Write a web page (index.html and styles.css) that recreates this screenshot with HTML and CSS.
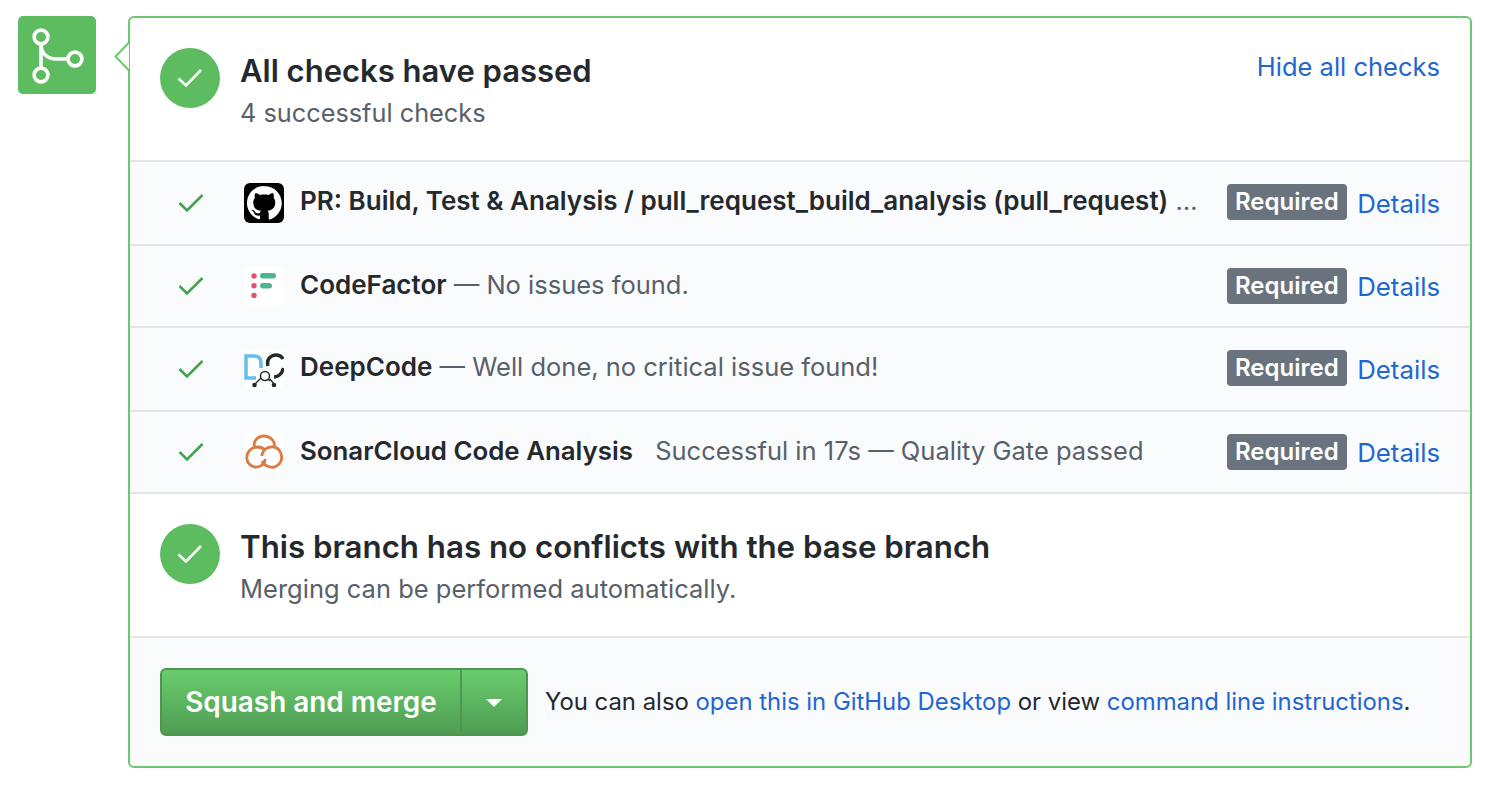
FILE: index.html
```html
<!DOCTYPE html>
<html lang="en">
<head>
    <meta charset="UTF-8">
    <title>Merge checks</title>
    <link rel="stylesheet" href="styles.css">
</head>
<body>
    <div class="merge-area">
        <div class="merge-icon">
            <svg width="78" height="78" viewBox="0 0 78 78" fill="none" stroke="#fff" stroke-width="3.6">
                <circle cx="23" cy="21" r="6.900"/>
                <circle cx="23" cy="59" r="6.900"/>
                <circle cx="57" cy="43" r="6.900"/>
                <path d="M23 28V52M23 30C24 38 30 43 38 43H50"/>
            </svg>
        </div>
        <div class="merge-box">
            <svg class="caret" width="16" height="30" viewBox="0 0 16 30">
                <path d="M15 0.5L1.5 14.5L15 28.5" fill="#fff" stroke="#6cc76f" stroke-width="2"/>
            </svg>

            <div class="section head-section">
                <div class="status-circle">
                    <svg width="30" height="30" viewBox="0 0 30 30" fill="none" stroke="#fff" stroke-width="2.6">
                        <path d="M3.5 15.5L11 22.5L26 7"/>
                    </svg>
                </div>
                <div class="section-text">
                    <h3>All checks have passed</h3>
                    <p>4 successful checks</p>
                </div>
                <a class="link toggle-link" href="#">Hide all checks</a>
            </div>

            <div class="check-row row-one">
                <svg class="check" width="26" height="20" viewBox="0 0 26 20" fill="none" stroke="#45a24d" stroke-width="2.6">
                    <path d="M1.5 10L9 17.5L24.5 2"/>
                </svg>
                <div class="logo logo-github">
                    <svg width="40" height="40" viewBox="0 0 16 16">
                        <path fill="#fff" d="M8 1.2C4.2 1.2 1.2 4.2 1.2 8c0 3 2 5.6 4.7 6.5.3.1.5-.1.5-.3v-1.2c-1.9.4-2.3-.9-2.3-.9-.3-.8-.8-1-.8-1-.6-.4 0-.4 0-.4.7 0 1 .7 1 .7.6 1 1.600.7 2.100.6 0-.4.200-.7.400-.9-1.500-.2-3.100-.8-3.100-3.400 0-.7.300-1.400.700-1.800-.1-.2-.3-.9.100-1.800 0 0 .6-.2 1.900.7.500-.2 1.100-.2 1.700-.2s1.200 0 1.700.2c1.300-.9 1.900-.7 1.900-.7.400.9.200 1.600.100 1.800.400.5.700 1.100.700 1.800 0 2.600-1.600 3.200-3.100 3.400.2.200.5.600.5 1.300v1.900c0 .2.100.4.500.3 2.700-.9 4.700-3.500 4.700-6.500 0-3.800-3-6.800-6.800-6.800z"/>
                    </svg>
                </div>
                <div class="check-text"><b>PR: Build, Test &amp; Analysis / pull_request_build_analysis (pull_request)</b> <span>…</span></div>
                <span class="label">Required</span>
                <a class="link" href="#">Details</a>
            </div>

            <div class="check-row row-two">
                <svg class="check" width="26" height="20" viewBox="0 0 26 20" fill="none" stroke="#45a24d" stroke-width="2.6">
                    <path d="M1.5 10L9 17.5L24.5 2"/>
                </svg>
                <div class="logo">
                    <svg width="40" height="40" viewBox="0 0 40 40">
                        <circle cx="10" cy="10" r="2.700" fill="#e0526e"/>
                        <circle cx="10" cy="19.700" r="2.700" fill="#e0526e"/>
                        <circle cx="10" cy="29.500" r="2.700" fill="#e0526e"/>
                        <rect x="16" y="7" width="16" height="5.500" rx="2.700" fill="#4fb393"/>
                        <rect x="16" y="17" width="12" height="5.500" rx="2.700" fill="#4fb393"/>
                    </svg>
                </div>
                <div class="check-text"><b>CodeFactor</b> <span>— No issues found.</span></div>
                <span class="label">Required</span>
                <a class="link" href="#">Details</a>
            </div>

            <div class="check-row row-three">
                <svg class="check" width="26" height="20" viewBox="0 0 26 20" fill="none" stroke="#45a24d" stroke-width="2.6">
                    <path d="M1.5 10L9 17.5L24.5 2"/>
                </svg>
                <div class="logo">
                    <svg width="40" height="40" viewBox="0 0 40 40" fill="none">
                        <path d="M12 29H2V7H10C15 7 17 10 17 14V19" stroke="#62c0ea" stroke-width="3.500"/>
                        <path d="M39 10C37 6 32 5 28 7C24 9 23 13 24 17M39.500 19C38 25 34 28 30 28" stroke="#24292e" stroke-width="3.500"/>
                        <circle cx="21" cy="27" r="4.500" stroke="#24292e" stroke-width="1.500"/>
                        <path d="M24 30L26 32M17 29L11 35M26 30L30 35" stroke="#24292e" stroke-width="1.300"/>
                        <circle cx="10.500" cy="36" r="2.300" fill="#24292e"/>
                        <circle cx="30" cy="36" r="2.300" fill="#24292e"/>
                    </svg>
                </div>
                <div class="check-text"><b>DeepCode</b> <span>— Well done, no critical issue found!</span></div>
                <span class="label">Required</span>
                <a class="link" href="#">Details</a>
            </div>

            <div class="check-row row-four">
                <svg class="check" width="26" height="20" viewBox="0 0 26 20" fill="none" stroke="#45a24d" stroke-width="2.6">
                    <path d="M1.5 10L9 17.5L24.5 2"/>
                </svg>
                <div class="logo">
                    <svg width="40" height="40" viewBox="0 0 40 40" fill="none" stroke="#dd7a3f" stroke-width="2.800">
                        <path d="M11 16C8 9 14 4 20 4C26 4 32 9 30 16"/>
                        <path d="M21 18C17 14 10 14 6 18C1 23 2 31 8 34C14 37 21 33 21 27"/>
                        <path d="M18 24C18 18 24 14 30 15C36 16 39 24 37 29C35 34 30 36 26 35C22 34 19 32 18 29"/>
                    </svg>
                </div>
                <div class="check-text"><b class="sonar-name">SonarCloud Code Analysis</b> <span class="gap-text">Successful in 17s — Quality Gate passed</span></div>
                <span class="label">Required</span>
                <a class="link" href="#">Details</a>
            </div>

            <div class="section branch-section">
                <div class="status-circle">
                    <svg width="30" height="30" viewBox="0 0 30 30" fill="none" stroke="#fff" stroke-width="2.6">
                        <path d="M3.5 15.5L11 22.5L26 7"/>
                    </svg>
                </div>
                <div class="section-text">
                    <h3>This branch has no conflicts with the base branch</h3>
                    <p>Merging can be performed automatically.</p>
                </div>
            </div>

            <div class="merge-footer">
                <div class="btn-group">
                    <button class="btn-merge">Squash and merge</button>
                    <button class="btn-arrow"><span class="arrow-down"></span></button>
                </div>
                <p class="alt-text">You can also <a class="link" href="#">open this in GitHub Desktop</a> or view <a class="link" href="#">command line instructions</a>.</p>
            </div>
        </div>
    </div>
</body>
</html>
```

FILE: styles.css
```css
body {
    margin: 0;
    background: #fff;
    font-family: Inter, "Liberation Sans", sans-serif;
    color: #24292e;
}
.merge-area {
    display: flex;
    align-items: flex-start;
    gap: 32px;
    padding: 16px 16px 0 18px;
}
.merge-icon {
    width: 78px;
    height: 78px;
    flex: none;
    background: #5dbb60;
    border-radius: 5px;
}
.merge-icon svg {
    display: block;
}
.merge-box {
    position: relative;
    flex: 1;
    min-width: 0;
    height: 752px;
    box-sizing: border-box;
    border: 2px solid #6cc76f;
    border-radius: 6px;
}
.caret {
    position: absolute;
    top: 24px;
    left: -16px;
}
.link {
    color: #1f66d1;
    text-decoration: none;
}
.section {
    display: flex;
    align-items: flex-start;
    box-sizing: border-box;
    padding: 30px 30px 0;
    background: #fff;
}
.head-section {
    height: 142px;
    border-radius: 6px 6px 0 0;
}
.branch-section {
    height: 144px;
    border-top: 2px solid #e3e5e8;
}
.status-circle {
    width: 60px;
    height: 60px;
    flex: none;
    display: flex;
    align-items: center;
    justify-content: center;
    margin-right: 20px;
    border-radius: 50%;
    background: #5dbb60;
}
.section-text {
    flex: 1;
}
.section-text h3 {
    margin: 4px 0 0;
    font-size: 31px;
    line-height: 38px;
    font-weight: 600;
}
.branch-section h3 {
    font-size: 31.250px;
}
.section-text p {
    margin: 8px 0 0;
    font-size: 25.300px;
    line-height: 30px;
    color: #586069;
}
.branch-section p {
    font-size: 25.500px;
}
.toggle-link {
    font-size: 25.500px;
    line-height: 30px;
    margin-top: 4px;
}
.check-row {
    display: flex;
    align-items: center;
    box-sizing: border-box;
    padding: 0 30px 0 48px;
    background: #fafbfc;
    border-top: 2px solid #e3e5e8;
    font-size: 25.500px;
}
.row-one { height: 84px; }
.row-two { height: 82px; }
.row-three { height: 84px; }
.row-four { height: 82px; }
.check {
    flex: none;
    margin-right: 40px;
}
.logo {
    width: 40px;
    height: 40px;
    flex: none;
    margin-right: 16px;
    overflow: hidden;
    background: #fff;
    border-radius: 6px;
}
.logo svg {
    display: block;
}
.logo-github {
    background: #000;
}
.check-text {
    flex: 1;
    min-width: 0;
    margin: 0 28px 3px 0;
    white-space: nowrap;
    color: #586069;
}
.check-text b {
    font-size: 26px;
    font-weight: 600;
    color: #24292e;
}
.check-text .sonar-name {
    font-size: 25.850px;
}
.gap-text {
    margin-left: 15px;
}
.label {
    flex: none;
    padding: 0 8.500px;
    margin-right: 10px;
    font-size: 24px;
    line-height: 36px;
    font-weight: 600;
    color: #fff;
    background: #6a737d;
    border-radius: 4px;
}
.row-one .check-text,
.row-three .check-text {
    margin-bottom: 5px;
}
.row-one .label,
.row-three .label {
    margin-bottom: 2px;
}
.check-row .link {
    flex: none;
    font-size: 25.800px;
}
.merge-footer {
    display: flex;
    align-items: center;
    box-sizing: border-box;
    height: 130px;
    padding: 0 30px;
    background: #fafbfc;
    border-top: 2px solid #e3e5e8;
    border-radius: 0 0 6px 6px;
}
.btn-group {
    display: flex;
    height: 68px;
    flex: none;
    margin-right: 17px;
}
.btn-merge,
.btn-arrow {
    height: 68px;
    border: 2px solid #4c9650;
    background: linear-gradient(#69cd6d, #4f9c53);
    color: #fff;
    font-family: inherit;
}
.btn-merge {
    width: 302px;
    padding: 0;
    font-size: 27.900px;
    font-weight: 600;
    border-radius: 6px 0 0 6px;
}
.btn-arrow {
    width: 68px;
    margin-left: -2px;
    padding: 0;
    border-radius: 0 6px 6px 0;
}
.arrow-down {
    display: inline-block;
    border-top: 8px solid #fff;
    border-left: 8px solid transparent;
    border-right: 8px solid transparent;
    vertical-align: middle;
}
.alt-text {
    margin: 0 0 2px;
    font-size: 23.900px;
    white-space: nowrap;
}
```
